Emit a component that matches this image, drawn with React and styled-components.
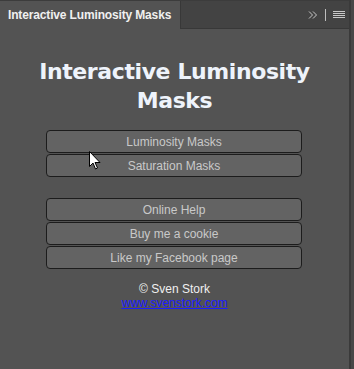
import React from "react";
import styled, { createGlobalStyle } from "styled-components";

const Global = createGlobalStyle`
  html, body { margin: 0; padding: 0; background: #535353; }
  body { width: 354px; height: 369px; overflow: hidden; }
`;

const Frame = styled.div`
  display: flex;
  width: 354px;
  height: 369px;
  position: relative;
  font-family: "Liberation Sans", Arial, sans-serif;
`;

const Panel = styled.div`
  width: 349px;
  display: flex;
  flex-direction: column;
  background: #535353;
`;

const SideStrip = styled.div`
  flex: 1;
  background: #484848;
  border-left: 2px solid #3a3a3a;
`;

const Header = styled.div`
  display: flex;
  height: 29px;
  border-top: 1px solid #3c3c3c;
  box-sizing: border-box;
`;

const Tab = styled.div`
  width: 180px;
  display: flex;
  align-items: center;
  padding-left: 8px;
  box-sizing: border-box;
  background: #535353;
  color: #f0f0f0;
  font-family: "Liberation Sans", Arial, sans-serif;
  font-weight: bold;
  font-size: 12px;
  letter-spacing: -0.15px;
  white-space: nowrap;
`;

const TabRest = styled.div`
  flex: 1;
  display: flex;
  align-items: center;
  justify-content: flex-end;
  gap: 7px;
  padding-right: 4px;
  background: #434343;
  border-left: 1px solid #383838;
  border-bottom: 1px solid #383838;
`;

const Divider = styled.div`
  width: 1px;
  height: 12px;
  background: #bdbdbd;
`;

const Content = styled.div`
  display: flex;
  flex-direction: column;
  align-items: center;
  padding-top: 28px;
`;

const Title = styled.h1`
  margin: 0;
  font-family: "DejaVu Sans", Verdana, sans-serif;
  font-weight: bold;
  font-size: 22px;
  letter-spacing: -0.4px;
  line-height: 29px;
  color: #eef3fb;
  text-align: center;
`;

const ButtonGroup = styled.div`
  display: flex;
  flex-direction: column;
  gap: 1px;
  width: 256px;
  margin-top: ${(p) => p.$top}px;
  margin-left: -1px;
`;

const Button = styled.button`
  height: 23px;
  box-sizing: border-box;
  border: 1px solid #1c1c1c;
  border-radius: 4px;
  background: #636363;
  color: #c9c9c9;
  font-family: "Liberation Sans", Arial, sans-serif;
  font-size: 12px;
  padding: 0;
  cursor: default;
`;

const Copyright = styled.div`
  margin-top: 13px;
  color: #f0f0f0;
  font-family: "Liberation Sans", Arial, sans-serif;
  font-size: 12px;
  line-height: 14px;
`;

const Link = styled.a`
  color: #1d1dff;
  font-family: "Liberation Sans", Arial, sans-serif;
  font-size: 12px;
  line-height: 14px;
  text-decoration: underline;
`;

const Cursor = styled.svg`
  position: absolute;
  left: 89px;
  top: 151px;
`;

export default function App() {
  return (
    <>
      <Global />
      <Frame>
        <Panel>
          <Header>
            <Tab>Interactive Luminosity Masks</Tab>
            <TabRest>
              <svg width="10" height="10" viewBox="0 0 10 10">
                <path d="M1 1.5 L4.5 5 L1 8.5 M5 1.5 L8.5 5 L5 8.5" stroke="#c8c8c8" strokeWidth="1" fill="none" />
              </svg>
              <Divider />
              <svg width="12" height="10" viewBox="0 0 12 10">
                <path d="M0 1.5h12M0 3.5h12M0 5.5h12M0 7.5h12" stroke="#c8c8c8" strokeWidth="1" />
              </svg>
            </TabRest>
          </Header>
          <Content>
            <Title>
              Interactive Luminosity
              <br />
              Masks
            </Title>
            <ButtonGroup $top={15}>
              <Button>Luminosity Masks</Button>
              <Button>Saturation Masks</Button>
            </ButtonGroup>
            <ButtonGroup $top={21}>
              <Button>Online Help</Button>
              <Button>Buy me a cookie</Button>
              <Button>Like my Facebook page</Button>
            </ButtonGroup>
            <Copyright>© Sven Stork</Copyright>
            <Link href="#">www.svenstork.com</Link>
          </Content>
        </Panel>
        <SideStrip />
        <Cursor width="12" height="19" viewBox="0 0 12 19">
          <path d="M0.5 0.5 L0.5 15.5 L4 12 L6.5 18 L8.5 17 L6 11.5 L11 11.5 Z" fill="#fff" stroke="#000" strokeWidth="1" />
        </Cursor>
      </Frame>
    </>
  );
}
